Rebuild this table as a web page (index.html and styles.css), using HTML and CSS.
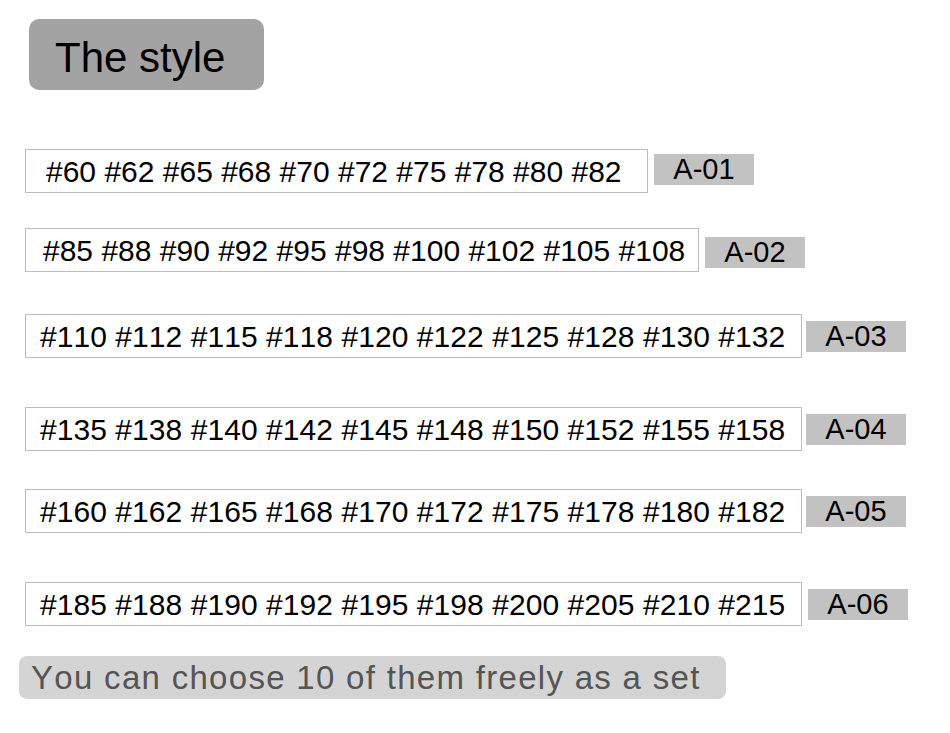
FILE: index.html
```html
<!DOCTYPE html>
<html>
<head>
<meta charset="utf-8">
<link rel="stylesheet" href="styles.css">
</head>
<body>
<div class="page">
  <div class="title">The style</div>
  <div class="row r1">
    <div class="codes w1">#60 #62 #65 #68 #70 #72 #75 #78 #80 #82</div>
    <div class="tag">A-01</div>
  </div>
  <div class="row r2">
    <div class="codes w2">#85 #88 #90 #92 #95 #98 #100 #102 #105 #108</div>
    <div class="tag">A-02</div>
  </div>
  <div class="row r3">
    <div class="codes w3">#110 #112 #115 #118 #120 #122 #125 #128 #130 #132</div>
    <div class="tag">A-03</div>
  </div>
  <div class="row r4">
    <div class="codes w3">#135 #138 #140 #142 #145 #148 #150 #152 #155 #158</div>
    <div class="tag">A-04</div>
  </div>
  <div class="row r5">
    <div class="codes w3">#160 #162 #165 #168 #170 #172 #175 #178 #180 #182</div>
    <div class="tag">A-05</div>
  </div>
  <div class="row r6">
    <div class="codes w3">#185 #188 #190 #192 #195 #198 #200 #205 #210 #215</div>
    <div class="tag">A-06</div>
  </div>
  <div class="note">You can choose 10 of them freely as a set</div>
</div>
</body>
</html>
```
FILE: styles.css
```css
html, body {
  margin: 0;
  padding: 0;
  background: #ffffff;
}

body {
  font-family: "Liberation Sans", Arial, sans-serif;
  font-kerning: none;
  color: #000;
}

.page {
  display: flex;
  flex-direction: column;
  align-items: flex-start;
  padding: 19px 0 0 25px;
}

.title {
  margin-left: 4px;
  width: 235px;
  height: 71px;
  box-sizing: border-box;
  padding: 8px 0 0 26px;
  line-height: 62px;
  font-size: 42px;
  background: #a3a3a3;
  border-radius: 10px;
  white-space: nowrap;
}

.row {
  display: flex;
  align-items: center;
  gap: 6px;
}

.r1 { margin-top: 59px; }
.r2 { margin-top: 35px; }
.r3 { margin-top: 42px; gap: 4px; }
.r4 { margin-top: 49px; gap: 4px; }
.r5 { margin-top: 38px; gap: 4px; }
.r6 { margin-top: 49px; gap: 6px; }

.codes {
  box-sizing: border-box;
  height: 44px;
  line-height: 43px;
  font-size: 30px;
  border: 1px solid #bdbdbd;
  white-space: nowrap;
  background: #fff;
}

.w1 { width: 623px; padding-left: 20px; }
.w2 { width: 674px; padding-left: 17px; }
.w3 { width: 777px; padding-left: 14px; letter-spacing: 0.06px; }

.tag {
  width: 100px;
  height: 31px;
  line-height: 31px;
  font-size: 29px;
  text-align: center;
  background: #c2c2c2;
}

.r1 .tag { margin-top: -4px; }
.r2 .tag { margin-top: 4px; }

.note {
  margin: 30px 0 0 -6px;
  width: 707px;
  height: 43px;
  box-sizing: border-box;
  padding-left: 12px;
  line-height: 43px;
  font-size: 33px;
  letter-spacing: 1.3px;
  color: #555555;
  background: #d4d4d4;
  border-radius: 8px;
  white-space: nowrap;
}
```
